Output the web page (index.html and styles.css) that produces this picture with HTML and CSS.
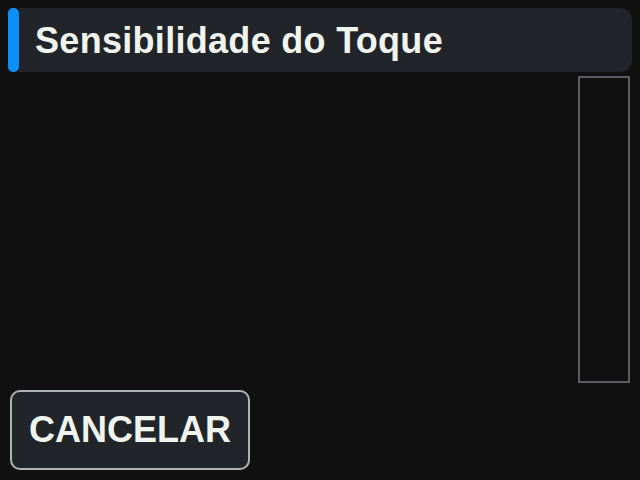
FILE: index.html
```html
<!DOCTYPE html>
<html lang="pt">
<head>
<meta charset="utf-8">
<title>Sensibilidade do Toque</title>
<link rel="stylesheet" href="styles.css">
</head>
<body>
<div class="screen">
  <header class="title-bar">
    <div class="accent"></div>
    <div class="title-box"><h1 class="title">Sensibilidade do Toque</h1></div>
  </header>
  <main class="content">
    <div class="list"></div>
    <div class="scrollbar"></div>
  </main>
  <footer class="actions">
    <button class="btn">CANCELAR</button>
  </footer>
</div>
</body>
</html>
```
FILE: styles.css
```css
html, body {
  margin: 0;
  padding: 0;
  background: #111111;
}
.screen {
  width: 640px;
  height: 480px;
  box-sizing: border-box;
  padding: 8px 8px 10px 10px;
  display: flex;
  flex-direction: column;
  font-family: "Liberation Sans", Arial, sans-serif;
  font-weight: bold;
  color: #f0f4ef;
}
.title-bar {
  display: flex;
  height: 64px;
  margin-left: -2px;
}
.accent {
  width: 11px;
  background: #0a8ff8;
  border-radius: 5px;
}
.title-box {
  flex: 1;
  background: #212429;
  border-radius: 0 12px 12px 0;
  display: flex;
  align-items: center;
  padding-left: 16px;
}
.title {
  margin: 0;
  font-size: 36px;
  font-weight: bold;
  line-height: 1;
  padding-top: 2px;
  letter-spacing: 0.3px;
}
.content {
  flex: 1;
  display: flex;
  padding-top: 4px;
  padding-bottom: 7px;
}
.list {
  flex: 1;
}
.scrollbar {
  width: 48px;
  margin-right: 2px;
  border: 2px solid #5c5c63;
}
.actions {
  display: flex;
}
.btn {
  width: 240px;
  height: 80px;
  box-sizing: border-box;
  background: #212429;
  border: 2px solid #b0b3b6;
  border-radius: 10px;
  color: #f0f4ef;
  font-family: "Liberation Sans", Arial, sans-serif;
  font-weight: bold;
  font-size: 36px;
  padding: 0;
  line-height: 1;
}
```
